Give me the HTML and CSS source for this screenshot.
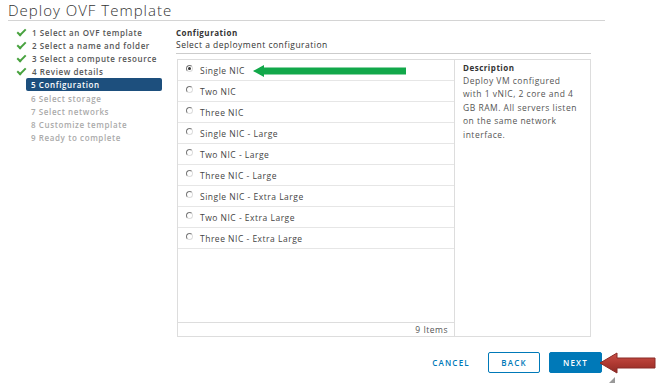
FILE: index.html
```html
<!DOCTYPE html>
<html lang="en">
<head>
    <meta charset="UTF-8">
    <title>Deploy OVF Template</title>
    <link rel="stylesheet" href="styles.css">
</head>
<body>
    <div class="wizard">
        <h1 class="wizard-title">Deploy OVF Template</h1>
        <div class="wizard-body">
            <ul class="steps">
                <li class="step done"><span class="check"></span>1 Select an OVF template</li>
                <li class="step done"><span class="check"></span>2 Select a name and folder</li>
                <li class="step done"><span class="check"></span>3 Select a compute resource</li>
                <li class="step done"><span class="check"></span>4 Review details</li>
                <li class="step active">5 Configuration</li>
                <li class="step">6 Select storage</li>
                <li class="step">7 Select networks</li>
                <li class="step">8 Customize template</li>
                <li class="step">9 Ready to complete</li>
            </ul>
            <div class="content">
                <div class="content-head">
                    <div class="content-title">Configuration</div>
                    <div class="content-sub">Select a deployment configuration</div>
                </div>
                <div class="config-box">
                    <div class="options">
                        <ul class="option-list">
                            <li class="option"><span class="radio checked"></span>Single NIC</li>
                            <li class="option"><span class="radio"></span>Two NIC</li>
                            <li class="option"><span class="radio"></span>Three NIC</li>
                            <li class="option"><span class="radio"></span>Single NIC - Large</li>
                            <li class="option"><span class="radio"></span>Two NIC - Large</li>
                            <li class="option"><span class="radio"></span>Three NIC - Large</li>
                            <li class="option"><span class="radio"></span>Single NIC - Extra Large</li>
                            <li class="option"><span class="radio"></span>Two NIC - Extra Large</li>
                            <li class="option"><span class="radio"></span>Three NIC - Extra Large</li>
                        </ul>
                        <div class="options-footer">9 Items</div>
                    </div>
                    <div class="desc">
                        <div class="desc-title">Description</div>
                        <p class="desc-text">Deploy VM configured with 1 vNIC, 2 core and 4 GB RAM. All servers listen on the same network interface.</p>
                    </div>
                </div>
            </div>
        </div>
        <div class="actions">
            <button class="btn btn-link">CANCEL</button>
            <button class="btn btn-outline">BACK</button>
            <button class="btn btn-primary">NEXT</button>
        </div>
    </div>

    <svg class="arrow-green" width="154" height="14" viewBox="0 0 154 14">
        <polygon points="0,6 11,0 11,2.5 153,2.5 153,9.5 11,9.5 11,12" fill="#12a84a"/>
    </svg>
    <svg class="arrow-red" width="58" height="22" viewBox="0 0 58 22">
        <defs>
            <linearGradient id="redfill" x1="0" y1="0" x2="0" y2="1">
                <stop offset="0" stop-color="#c9504a"/>
                <stop offset="0.5" stop-color="#b03a32"/>
                <stop offset="1" stop-color="#8f2a24"/>
            </linearGradient>
        </defs>
        <polygon points="1,11 18,1 18,6 56,6 56,16 18,16 18,21" fill="url(#redfill)" stroke="#8a2b26" stroke-width="1"/>
    </svg>
    <span class="grip"></span>
</body>
</html>
```

FILE: styles.css
```css
body {
    margin: 0;
    padding: 0;
    background-color: #fff;
    color: #565656;
    font-family: 'Open Sans', 'DejaVu Sans', sans-serif;
    letter-spacing: 0.5px;
}
ul {
    list-style: none;
    margin: 0;
    padding: 0;
}
.wizard {
    width: 663px;
    height: 384px;
}
.wizard-title {
    margin: 0 58px 0 8px;
    font-size: 15px;
    line-height: 20px;
    font-weight: 300;
    letter-spacing: 1px;
    color: #333;
    border-bottom: 1px solid #d4d4d4;
}
.wizard-body {
    display: flex;
}
.steps {
    width: 160px;
    padding: 5px 0 0 16px;
}
.step {
    display: flex;
    align-items: center;
    height: 13.1px;
    font-size: 8px;
    font-weight: 600;
    letter-spacing: 0.6px;
    color: #aaa;
    padding-left: 15px;
    margin-right: 14px;
}
.step.done {
    color: #565656;
    padding-left: 0;
}
.check {
    width: 7px;
    height: 3px;
    border-left: 2px solid #48a23f;
    border-bottom: 2px solid #48a23f;
    transform: rotate(-45deg);
    margin: 0 6px 3px 1px;
}
.step.active {
    margin-left: 10px;
    padding-left: 5px;
    background-color: #1d4f7d;
    color: #fff;
    border-radius: 2px;
}
.content {
    width: 415px;
    padding-top: 6px;
}
.content-head {
    border-bottom: 1px solid #ccc;
    padding-bottom: 2px;
    margin-bottom: 5px;
}
.content-title {
    font-size: 8px;
    font-weight: 700;
    color: #333;
    line-height: 12px;
}
.content-sub {
    font-size: 8.5px;
    color: #333;
    line-height: 12px;
}
.config-box {
    display: flex;
    height: 276px;
    border: 1px solid #ddd;
    margin-left: 1px;
}
.options {
    width: 276px;
    display: flex;
    flex-direction: column;
    border-right: 1px solid #ddd;
}
.option-list {
    flex: 1;
}
.option {
    display: flex;
    align-items: center;
    height: 20px;
    border-bottom: 1px solid #e6e6e6;
    font-size: 8.5px;
    color: #444;
    padding-left: 8px;
}
.radio {
    width: 5px;
    height: 5px;
    border: 1px solid #777;
    border-right-color: #ddd;
    border-bottom-color: #ddd;
    border-radius: 50%;
    margin: 0 7px 3px 0;
    position: relative;
}
.radio.checked::after {
    content: "";
    position: absolute;
    left: 1px;
    top: 1px;
    width: 3px;
    height: 3px;
    border-radius: 50%;
    background-color: #333;
}
.options-footer {
    height: 13px;
    border-top: 1px solid #ddd;
    font-size: 8.5px;
    line-height: 13px;
    text-align: right;
    padding-right: 6px;
    color: #555;
}
.desc {
    flex: 1;
    padding: 2px 10px 0 8px;
}
.desc-title {
    font-size: 8px;
    font-weight: 700;
    color: #333;
    line-height: 12px;
}
.desc-text {
    margin: 0;
    font-size: 8.5px;
    line-height: 13.4px;
    color: #555;
}
.actions {
    display: flex;
    justify-content: flex-end;
    gap: 9px;
    margin: 15px 61px 0 0;
}
.btn {
    height: 21px;
    font-family: inherit;
    font-size: 8px;
    font-weight: 600;
    letter-spacing: 1.2px;
    border-radius: 2px;
    padding: 0;
}
.btn-link {
    border: none;
    background: none;
    color: #0079b8;
    width: 56px;
}
.btn-outline {
    width: 52px;
    border: 1px solid #0079b8;
    background-color: #fff;
    color: #0079b8;
}
.btn-primary {
    width: 53px;
    border: 1px solid #0079b8;
    background-color: #0079b8;
    color: #fff;
}
.arrow-green {
    position: absolute;
    left: 253px;
    top: 65px;
}
.arrow-red {
    position: absolute;
    left: 599px;
    top: 352px;
}
.grip {
    position: absolute;
    left: 609px;
    top: 377px;
    width: 0;
    height: 0;
    border-left: 6px solid transparent;
    border-bottom: 6px solid #999;
}
```
